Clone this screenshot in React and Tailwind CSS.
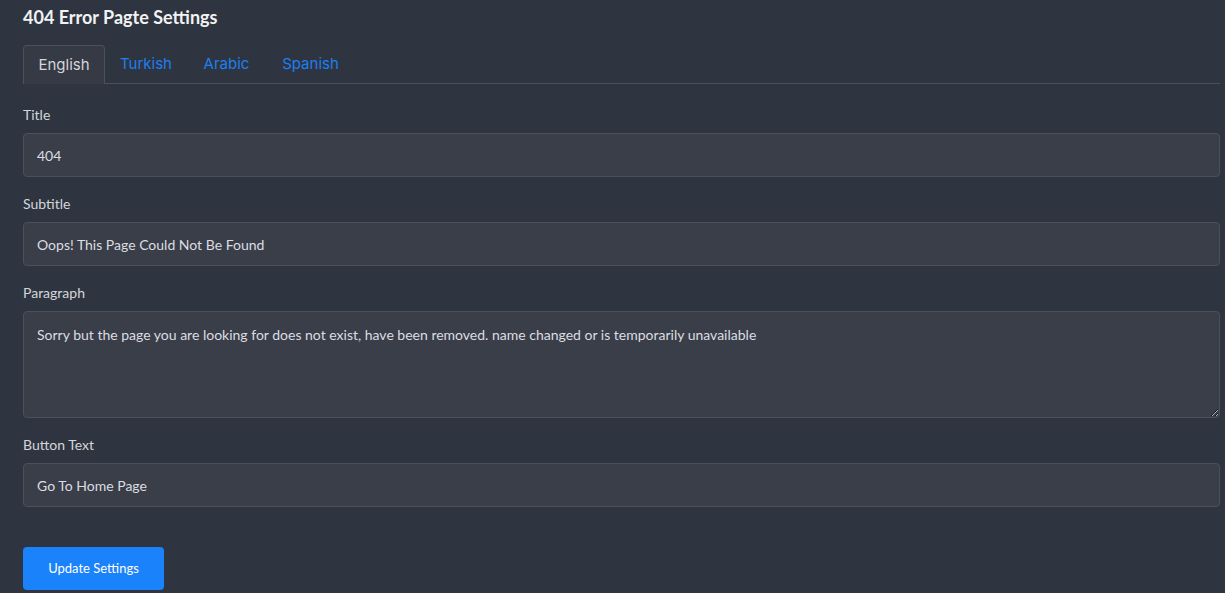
import React from "react";

const lato = { fontFamily: "Lato, 'Noto Sans', sans-serif" };

function Field({ label, value }) {
  return (
    <div className="flex flex-col">
      <label className="text-[14px] leading-[22px] text-[#d3d6db] mb-[7px]">{label}</label>
      <input
        readOnly
        value={value}
        className="h-[44px] w-full rounded-[4px] border border-[#4b505b] bg-[#3a3e49] px-[13px] text-[14px] text-[#dadde2] outline-none"
      />
    </div>
  );
}

export default function App() {
  const tabs = [
    { name: "English", w: "w-[82px]", active: true },
    { name: "Turkish", w: "w-[82px]" },
    { name: "Arabic", w: "w-[79px]" },
    { name: "Spanish", w: "w-[89px]" },
  ];
  return (
    <div
      className="min-h-[593px] w-full bg-[#2f3540] pl-[23px] pr-[5px] pt-[4px]"
      style={lato}
    >
      <h1 className="text-[18px] leading-[26px] font-bold text-[#f1f2f4]">404 Error Pagte Settings</h1>
      <div className="mt-[15px] flex border-b border-[#4b505b]">
        {tabs.map((t) => (
          <div
            key={t.name}
            className={`${t.w} h-[39px] -mb-px flex items-center justify-center text-[15px] ${
              t.active
                ? "rounded-t-[4px] border border-b-0 border-[#4b505b] bg-[#353a45] text-[#d3d6db]"
                : "text-[#1d7ff0]"
            }`}
            style={{ fontFamily: "Inter, 'Open Sans', sans-serif" }}
          >
            {t.name}
          </div>
        ))}
      </div>
      <div className="mt-[20px] flex flex-col gap-[16px]">
        <Field label="Title" value="404" />
        <Field label="Subtitle" value="Oops! This Page Could Not Be Found" />
        <div className="flex flex-col">
          <label className="text-[14px] leading-[22px] text-[#d3d6db] mb-[7px]">Paragraph</label>
          <textarea
            readOnly
            value="Sorry but the page you are looking for does not exist, have been removed. name changed or is temporarily unavailable"
            className="block h-[107px] w-full rounded-[4px] border border-[#4b505b] bg-[#3a3e49] px-[13px] pt-[12px] text-[14px] leading-[22px] text-[#dadde2] outline-none"
          />
        </div>
        <Field label="Button Text" value="Go To Home Page" />
      </div>
      <button className="mt-[40px] h-[43px] w-[141px] rounded-[4px] bg-[#1a82fb] text-[13px] text-white">
        Update Settings
      </button>
    </div>
  );
}
